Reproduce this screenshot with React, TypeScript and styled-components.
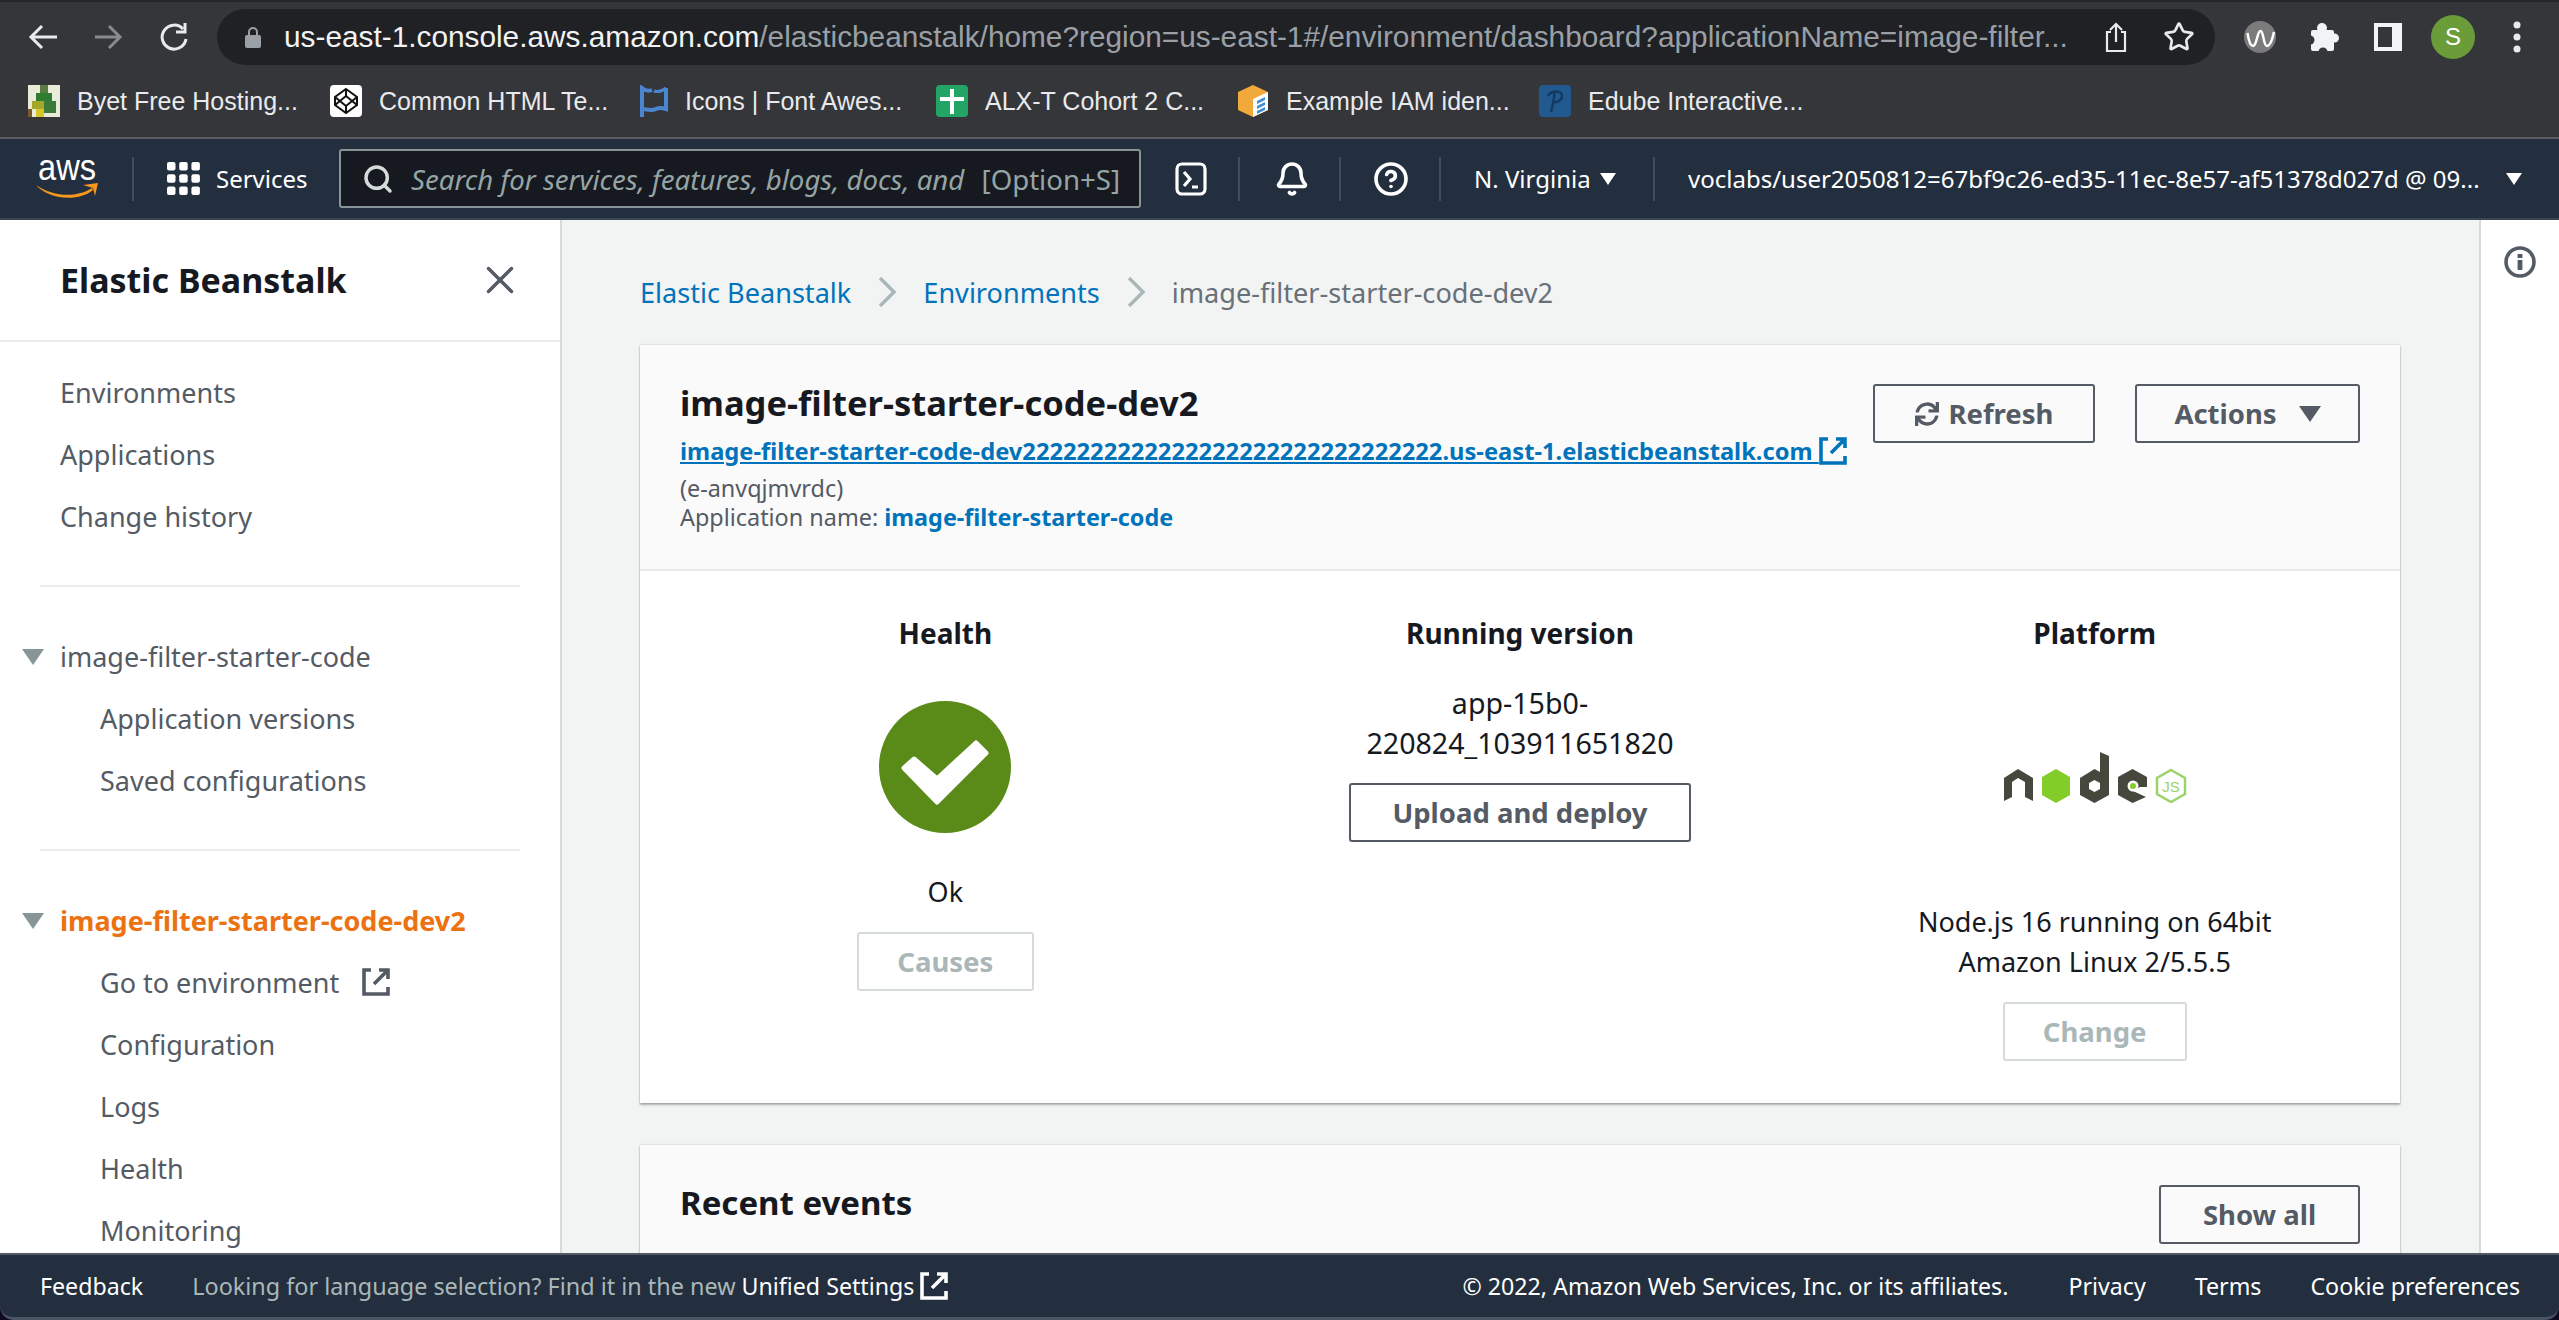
import React from "react";
import styled, { createGlobalStyle } from "styled-components";
import { Bell, CircleHelp, Star, X, Search as SearchGlyph } from "lucide-react";
import { FaSync } from "react-icons/fa";

const Global = createGlobalStyle`
  html, body { margin: 0; padding: 0; background: #120a24; overflow: hidden; }
  * { box-sizing: border-box; }
  body { font-family: "Noto Sans", "Open Sans", sans-serif; }
`;

const Page = styled.div`
  width: 2559px; height: 1320px; display: flex; flex-direction: column; overflow: hidden;
`;

/* Browser chrome */
const BrowserTop = styled.header`
  height: 139px; flex: none; background: #35363a; border-top: 2px solid #26272a;
  border-bottom: 2px solid #5c5d60; display: flex; flex-direction: column;
`;
const Toolbar = styled.div`
  height: 56px; margin-top: 7px; flex: none; display: flex; align-items: center; padding-left: 28px;
`;
const NavBtn = styled.span<{ $w?: number }>`
  width: ${p => p.$w ?? 65}px; flex: none; display: flex; align-items: center;
`;
const Omnibox = styled.div`
  width: 1998px; height: 56px; flex: none; background: #202124; border-radius: 28px;
  display: flex; align-items: center; padding-left: 28px;
`;
const UrlHost = styled.span`
  font-family: "Liberation Sans", sans-serif; font-size: 29.8px; color: #f1f3f4; white-space: nowrap; margin-left: 23px;
`;
const UrlPath = styled.span`
  font-family: "Liberation Sans", sans-serif; font-size: 29.8px; color: #9aa0a6; white-space: nowrap; flex: none; width: 1326px;
`;
const OmniIcons = styled.div`
  display: flex; align-items: center; gap: 36px; margin-left: 20px;
`;
const ExtIcons = styled.div`
  display: flex; align-items: center; margin-left: 29px;
`;
const Avatar = styled.span`
  width: 44px; height: 44px; border-radius: 50%; background: #6a9c3a; color: #fff; font-size: 24px;
  font-family: "Liberation Sans", sans-serif; display: flex; align-items: center; justify-content: center;
  margin: 0 38px 0 29px;
`;
const Bookmarks = styled.div`
  height: 32px; margin-top: 20px; flex: none; display: flex; align-items: center; padding-left: 28px;
`;
const Bookmark = styled.div<{ $w: number }>`
  width: ${p => p.$w}px; flex: none; display: flex; align-items: center; gap: 17px;
  font-family: "Liberation Sans", sans-serif; font-size: 25px; color: #e8eaed; white-space: nowrap;
`;

/* AWS nav */
const AwsNav = styled.nav`
  height: 81px; flex: none; background: #232f3e; border-bottom: 2px solid #3b4654; display: flex; align-items: center;
  color: #fff; padding-left: 37px; font-size: 24px;
`;
const LogoBox = styled.span`
  width: 61px; height: 42px; flex: none; display: block;
`;
const NavDivider = styled.span<{ $l: number; $r: number }>`
  width: 2px; height: 44px; flex: none; background: #414d5c; margin: 0 ${p => p.$r}px 0 ${p => p.$l}px;
`;
const Services = styled.span`
  margin: 0 34px 0 16px; flex: none; width: 89px; white-space: nowrap;
`;
const SearchBox = styled.div`
  width: 802px; height: 59px; flex: none; background: #16191f; border: 2px solid #879596; border-radius: 3px;
  display: flex; align-items: center; padding: 0 19px 0 21px; color: #95a5a6; font-size: 27.6px; white-space: nowrap;
`;
const SearchHint = styled.span`
  font-style: italic; margin-left: 17px; flex: 1; overflow: hidden;
`;
const NavText = styled.span<{ $w: number }>`
  width: ${p => p.$w}px; flex: none; white-space: nowrap;
`;
const Caret = styled.span<{ $s?: number; $c?: string }>`
  display: block; width: 0; height: 0; flex: none;
  border-left: ${p => p.$s ?? 9}px solid transparent; border-right: ${p => p.$s ?? 9}px solid transparent;
  border-top: ${p => Math.round((p.$s ?? 9) * 1.45)}px solid ${p => p.$c ?? "#fff"};
`;

/* Body */
const Body = styled.div`
  flex: 1; min-height: 0; display: flex; background: #f2f3f3; overflow: hidden;
`;
const Side = styled.aside`
  width: 562px; flex: none; background: #fff; border-right: 2px solid #d5dbdb; overflow: hidden;
`;
const SideHead = styled.div`
  height: 122px; border-bottom: 2px solid #eaeded; display: flex; align-items: center; justify-content: space-between;
  padding: 0 37px 0 60px; color: #16191f; font-weight: 700; font-size: 34px;
`;
const SideList = styled.ul`
  list-style: none; margin: 0; padding: 19px 0 0;
`;
const SideItem = styled.li<{ $sub?: boolean; $active?: boolean }>`
  height: 62px; display: flex; align-items: center; position: relative;
  padding-left: ${p => (p.$sub ? 100 : 60)}px;
  font-size: 27px; color: ${p => (p.$active ? "#ec7211" : "#545b64")}; font-weight: ${p => (p.$active ? 700 : 400)};
`;
const Twist = styled.span`
  position: absolute; left: 22px; top: 24px; display: block;
`;
const SideRule = styled.hr`
  border: 0; height: 2px; background: #eaeded; margin: 38px 40px;
`;
const Main = styled.main`
  flex: 1; padding: 0 79px 0 78px; min-width: 0;
`;
const Crumbs = styled.div`
  height: 125px; display: flex; align-items: center; font-size: 27.1px; gap: 27px; padding-top: 19px;
`;
const CrumbLink = styled.a`
  color: #0073bb;
`;
const CrumbNow = styled.span`
  color: #687078;
`;
const Card = styled.section`
  background: #fff; box-shadow: 0 2px 2px rgba(0,28,36,.3), 0 0 2px rgba(0,28,36,.2); margin-bottom: 42px;
`;
const CardHead = styled.div`
  height: 226px; background: #fafafa; border-bottom: 2px solid #eaeded; padding: 35px 40px 0; display: flex; justify-content: space-between;
`;
const CardTitle = styled.h1`
  margin: 0; font-size: 34.5px; line-height: 46px; color: #16191f; font-weight: 700; white-space: nowrap;
`;
const EnvLink = styled.a`
  display: flex; align-items: center; margin-top: 7px; height: 36px; font-size: 23.7px; font-weight: 700; color: #0073bb; white-space: pre;
`;
const Under = styled.span` text-decoration: underline; `;
const Meta = styled.div`
  font-size: 23.4px; line-height: 29px; color: #545b64; margin-top: 5px;
`;
const MetaLink = styled.a`
  color: #0073bb; font-weight: 700;
`;
const HeadActions = styled.div`
  display: flex; gap: 40px; align-items: flex-start; margin-top: 4px;
`;
const Btn = styled.button<{ $w: number; $disabled?: boolean }>`
  width: ${p => p.$w}px; height: 59px; flex: none; background: ${p => (p.$disabled ? "#fff" : "transparent")};
  border: 2px solid ${p => (p.$disabled ? "#d5dbdb" : "#545b64")}; border-radius: 3px;
  font: 700 27.5px "Noto Sans", sans-serif; color: ${p => (p.$disabled ? "#aab7b8" : "#545b64")};
  display: flex; align-items: center; justify-content: center; gap: 10px; padding: 0;
`;
const Columns = styled.div`
  display: grid; grid-template-columns: repeat(3, 1fr); height: 532px; padding: 0 18px;
`;
const Col = styled.div`
  display: flex; flex-direction: column; align-items: center; color: #16191f; font-size: 27px; text-align: center; padding-top: 43px;
`;
const ColTitle = styled.h3`
  margin: 0; font-size: 28px; line-height: 38px; font-weight: 700;
`;
const Lines = styled.div<{ $mt: number; $size?: number }>`
  line-height: 40px; margin-top: ${p => p.$mt}px; margin-bottom: 20px; font-size: ${p => p.$size ?? 27}px;
`;
const Mark = styled.span<{ $mt: number; $mb: number }>`
  display: block; margin-top: ${p => p.$mt}px; margin-bottom: ${p => p.$mb}px; line-height: 0;
`;
const OkLine = styled.span`
  line-height: 38px; margin-bottom: 21px;
`;
const EventsHead = styled.div`
  height: 130px; background: #fafafa; display: flex; justify-content: space-between; padding: 40px 40px 0;
`;
const EventsTitle = styled.h2`
  margin: 0; font-size: 33px; line-height: 36px; color: #16191f; font-weight: 700;
`;
const Rail = styled.aside`
  width: 80px; flex: none; background: #fff; border-left: 2px solid #d5dbdb; display: flex; justify-content: center; padding-top: 26px;
`;

/* Footer */
const Foot = styled.footer`
  height: 67px; flex: none; background: #232f3e; border-top: 2px solid #545b64; border-bottom: 3px solid #4a5564;
  border-radius: 0 0 14px 14px; color: #fff; font-size: 23.2px; display: flex; align-items: center; padding: 0 39px 0 40px; white-space: nowrap;
`;
const FootMuted = styled.span`
  color: #aab7b8; font-size: 23.4px; margin-left: 49px; margin-right: 6px;
`;
const FootRight = styled.div`
  margin-left: auto; display: flex; gap: 49px; align-items: center;
`;
const FootCopy = styled.span`
  margin-right: 11px;
`;
const Spacer = styled.span<{ $w: number }>`
  width: ${p => p.$w}px; flex: none;
`;

const Ext = ({ c, s }: { c: string; s: number }) => (
  <svg width={s} height={s} viewBox="0 0 28 28" fill="none" stroke={c} strokeWidth="3.6" style={{ flex: "none" }}>
    <path d="M9 2H2v24h24v-7" />
    <path d="M17 2h9v9M26 2 12 16" />
  </svg>
);

const AwsLogo = () => (
  <LogoBox>
    <svg width="61" height="42" viewBox="0 0 61 42" style={{ overflow: "visible" }}>
      <text x="1" y="22" fontFamily="Liberation Sans, sans-serif" fontSize="36" fill="#fff" textLength="58" lengthAdjust="spacingAndGlyphs">aws</text>
      <path d="M-1 27C16 39 40 40 55 30l1 2C42 44 12 42-1 27Z" fill="#f7981d" />
      <path d="M46 27l15-2-3 13-2-8z" fill="#f7981d" />
    </svg>
  </LogoBox>
);

const GridIcon = () => (
  <svg width="33" height="33" viewBox="0 0 33 33" fill="#fff" style={{ flex: "none" }}>
    {[0, 12.2, 24.4].flatMap(y => [0, 12.2, 24.4].map(x => <rect key={`${x}-${y}`} x={x} y={y} width="8.5" height="8.5" rx="2" />))}
  </svg>
);

const NodeLogo = () => (
  <svg width="184" height="52" viewBox="0 0 184 52" style={{ display: "block" }}>
    <path d="M1 50V27l14-9 15 9v23l-8-4V31l-7-4-6 4v15z" fill="#46483e" />
    <path d="M53 18l14 8v18l-14 8-14-8V26z" fill="#83cd29" />
    <path fillRule="evenodd" d="M97 1l9 4v39l-14.500 8L77 44V27l14.500-9 5.500 3zM91.500 29 86 32v6l5.500 3 5.500-3v-6z" fill="#46483e" />
    <path d="M129.500 18 144 26v10h-7l-7 4 13 6-13.500 6L115 44V26z" fill="#46483e" />
    <circle cx="130" cy="35" r="5.500" fill="#fff" />
    <circle cx="130" cy="35" r="3" fill="#83cd29" />
    <path d="M168 19l14 8v16l-14 8-14-8V27z" fill="none" stroke="#9ad36a" strokeWidth="2.500" />
    <text x="168" y="41" textAnchor="middle" fontFamily="Liberation Sans, sans-serif" fontSize="15" fill="#9ad36a">JS</text>
  </svg>
);

const Favicons = {
  byet: (
    <svg width="32" height="32" viewBox="0 0 8 8" shapeRendering="crispEdges" style={{ flex: "none" }}>
      <rect width="8" height="8" fill="#e9ecd8" />
      <rect x="3" y="0" width="2" height="2" fill="#587c41" /><rect x="2" y="2" width="4" height="2" fill="#2e7d32" />
      <rect x="1" y="4" width="3" height="2" fill="#a3a829" /><rect x="4" y="4" width="3" height="3" fill="#3c7a3a" />
      <rect x="2" y="6" width="2" height="2" fill="#d7c529" /><rect x="0" y="6" width="1" height="2" fill="#7a5a2a" />
    </svg>
  ),
  codepen: (
    <svg width="32" height="32" viewBox="0 0 32 32" style={{ flex: "none" }}>
      <rect width="32" height="32" rx="4" fill="#fff" />
      <path d="M16 4 27 12v8L16 28 5 20v-8zM16 4v7M16 21v7M5 12l11 9 11-9M5 20l11-9 11 9" fill="none" stroke="#111" strokeWidth="2" />
    </svg>
  ),
  flag: (
    <svg width="28" height="32" viewBox="0 0 28 32" fill="none" style={{ flex: "none" }}>
      <path d="M2 32V3q5 4 10 2" stroke="#4a86cf" strokeWidth="4" />
      <path d="M26 3v21q-6-2-10 0t-12 0" stroke="#4a86cf" strokeWidth="4" />
      <path d="M14 6q6 2 12-3" stroke="#4a86cf" strokeWidth="3" />
    </svg>
  ),
  sheet: (
    <svg width="32" height="32" viewBox="0 0 32 32" style={{ flex: "none" }}>
      <rect width="32" height="32" rx="4" fill="#23a566" />
      <path d="M14 4h4v8h10v4H18v13h-4V16H4v-4h10z" fill="#fff" />
    </svg>
  ),
  box: (
    <svg width="32" height="32" viewBox="0 0 32 32" style={{ flex: "none" }}>
      <path d="M16 0 31 7v18l-15 7L1 25V7z" fill="#f2a93b" />
      <path d="M16 14 31 7v18l-15 7z" fill="#ffffff" />
      <path d="M20 16l8-4v3l-8 4zM20 21l8-4v3l-8 4zM20 26l8-4v3l-8 4z" fill="#3f8fd2" />
    </svg>
  ),
  edube: (
    <svg width="32" height="32" viewBox="0 0 32 32" style={{ flex: "none" }}>
      <rect width="32" height="32" rx="4" fill="#22598f" />
      <path d="M12 27c2-7 3-14 4-21M9 11c2-5 14-7 14 0 0 5-6 7-9 6" fill="none" stroke="#123a63" strokeWidth="2.4" />
    </svg>
  ),
};

export default function App() {
  return (
    <Page>
      <Global />
      <BrowserTop>
        <Toolbar>
          <NavBtn>
            <svg width="30" height="32" viewBox="0 0 30 32" fill="none" stroke="#e8eaed" strokeWidth="3"><path d="M29 16H3M14 5 3 16l11 11" /></svg>
          </NavBtn>
          <NavBtn>
            <svg width="30" height="32" viewBox="0 0 30 32" fill="none" stroke="#8a8b8e" strokeWidth="3"><path d="M2 16h25M16 5l11 11-11 11" /></svg>
          </NavBtn>
          <NavBtn $w={59}>
            <svg width="30" height="32" viewBox="0 0 30 32" fill="none" stroke="#e8eaed" strokeWidth="3"><path d="M25 8a12 12 0 1 0 3 10" /><path d="M27 2v9h-9" /></svg>
          </NavBtn>
          <Omnibox>
            <svg width="16" height="22" viewBox="0 0 16 22" style={{ flex: "none" }}>
              <path d="M4 9V6a4 4 0 0 1 8 0v3" fill="none" stroke="#9aa0a6" strokeWidth="2" />
              <rect y="9" width="16" height="13" rx="2" fill="#9aa0a6" />
            </svg>
            <UrlHost>us-east-1.console.aws.amazon.com</UrlHost>
            <UrlPath>/elasticbeanstalk/home?region=us-east-1#/environment/dashboard?applicationName=image-filter...</UrlPath>
            <OmniIcons>
              <svg width="22" height="30" viewBox="0 0 22 30" fill="none" stroke="#e8eaed" strokeWidth="2.2" style={{ flex: "none" }}>
                <path d="M6 10H2v19h18V10h-4M11 20V2M5 8l6-6 6 6" />
              </svg>
              <Star size={32} color="#e8eaed" strokeWidth={2} />
            </OmniIcons>
          </Omnibox>
          <ExtIcons>
            <svg width="32" height="32" viewBox="0 0 32 32" style={{ flex: "none" }}>
              <circle cx="16" cy="16" r="16" fill="#7b7b7b" />
              <path d="M3.500 12C5 22 7 25 9 25c4 0 4-15 7.500-15S19 25 23 25c3 0 5-5 7-14" fill="none" stroke="#fff" strokeWidth="2.500" />
            </svg>
            <Spacer $w={34} />
            <svg width="29" height="28" viewBox="0 0 29 28" style={{ flex: "none" }}>
              <g fill="#f1f3f4">
                <rect x="1" y="7" width="23" height="21" rx="2" />
                <circle cx="12" cy="5" r="5" />
                <circle cx="24.500" cy="15" r="4.500" />
              </g>
              <circle cx="0" cy="17" r="4.500" fill="#35363a" />
              <circle cx="13" cy="29" r="4.500" fill="#35363a" />
            </svg>
            <Spacer $w={35} />
            <svg width="28" height="28" viewBox="0 0 28 28" style={{ flex: "none" }}>
              <path fillRule="evenodd" d="M0 0h28v28H0zM4 4v20h14V4z" fill="#f1f3f4" />
            </svg>
            <Avatar>S</Avatar>
            <svg width="8" height="32" viewBox="0 0 8 32" fill="#e8eaed" style={{ flex: "none" }}>
              <circle cx="4" cy="4" r="3.500" /><circle cx="4" cy="16" r="3.500" /><circle cx="4" cy="28" r="3.500" />
            </svg>
          </ExtIcons>
        </Toolbar>
        <Bookmarks>
          <Bookmark $w={302}>{Favicons.byet}Byet Free Hosting...</Bookmark>
          <Bookmark $w={310}>{Favicons.codepen}Common HTML Te...</Bookmark>
          <Bookmark $w={296}>{Favicons.flag}Icons | Font Awes...</Bookmark>
          <Bookmark $w={301}>{Favicons.sheet}ALX-T Cohort 2 C...</Bookmark>
          <Bookmark $w={302}>{Favicons.box}Example IAM iden...</Bookmark>
          <Bookmark $w={300}>{Favicons.edube}Edube Interactive...</Bookmark>
        </Bookmarks>
      </BrowserTop>
      <AwsNav>
        <AwsLogo />
        <NavDivider $l={34} $r={33} />
        <GridIcon />
        <Services>Services</Services>
        <SearchBox>
          <SearchGlyph size={32} color="#d5dbdb" strokeWidth={2.6} style={{ flex: "none" }} />
          <SearchHint>Search for services, features, blogs, docs, and</SearchHint>
          <span>[Option+S]</span>
        </SearchBox>
        <Spacer $w={34} />
        <svg width="32" height="34" viewBox="0 0 32 34" fill="none" stroke="#fff" strokeWidth="3.200" style={{ flex: "none" }}>
          <rect x="2" y="2" width="28" height="30" rx="5" /><path d="m9 10 6 7-6 7M17 25h6" />
        </svg>
        <NavDivider $l={31} $r={34} />
        <Bell size={36} color="#fff" strokeWidth={2.400} style={{ flex: "none" }} />
        <NavDivider $l={29} $r={32} />
        <CircleHelp size={36} color="#fff" strokeWidth={2.400} style={{ flex: "none" }} />
        <NavDivider $l={30} $r={33} />
        <NavText $w={126}>N. Virginia</NavText>
        <Caret $s={8} />
        <NavDivider $l={37} $r={33} />
        <NavText $w={818}>voclabs/user2050812=67bf9c26-ed35-11ec-8e57-af51378d027d @ 09...</NavText>
        <Caret $s={8} />
      </AwsNav>
      <Body>
        <Side>
          <SideHead>
            Elastic Beanstalk
            <X size={46} color="#545b64" strokeWidth={1.800} />
          </SideHead>
          <SideList>
            <SideItem>Environments</SideItem>
            <SideItem>Applications</SideItem>
            <SideItem>Change history</SideItem>
            <SideRule />
            <SideItem><Twist><Caret $s={11} $c="#879596" /></Twist>image-filter-starter-code</SideItem>
            <SideItem $sub>Application versions</SideItem>
            <SideItem $sub>Saved configurations</SideItem>
            <SideRule />
            <SideItem $active><Twist><Caret $s={11} $c="#879596" /></Twist>image-filter-starter-code-dev2</SideItem>
            <SideItem $sub>Go to environment<Spacer $w={23} /><Ext c="#545b64" s={28} /></SideItem>
            <SideItem $sub>Configuration</SideItem>
            <SideItem $sub>Logs</SideItem>
            <SideItem $sub>Health</SideItem>
            <SideItem $sub>Monitoring</SideItem>
          </SideList>
        </Side>
        <Main>
          <Crumbs>
            <CrumbLink>Elastic Beanstalk</CrumbLink>
            <svg width="18" height="30" viewBox="0 0 18 30" fill="none" stroke="#aab7b8" strokeWidth="3.400"><path d="m2 1 14 14L2 29" /></svg>
            <CrumbLink>Environments</CrumbLink>
            <svg width="18" height="30" viewBox="0 0 18 30" fill="none" stroke="#aab7b8" strokeWidth="3.400"><path d="m2 1 14 14L2 29" /></svg>
            <CrumbNow>image-filter-starter-code-dev2</CrumbNow>
          </Crumbs>
          <Card>
            <CardHead>
              <div>
                <CardTitle>image-filter-starter-code-dev2</CardTitle>
                <EnvLink>
                  <Under>image-filter-starter-code-dev2222222222222222222222222222222.us-east-1.elasticbeanstalk.com </Under>
                  <Ext c="#0073bb" s={28} />
                </EnvLink>
                <Meta>
                  (e-anvqjmvrdc)<br />
                  Application name: <MetaLink>image-filter-starter-code</MetaLink>
                </Meta>
              </div>
              <HeadActions>
                <Btn $w={222}><FaSync size={24} />Refresh</Btn>
                <Btn $w={225}>Actions<Spacer $w={2} /><Caret $s={11} $c="#545b64" /></Btn>
              </HeadActions>
            </CardHead>
            <Columns>
              <Col>
                <ColTitle>Health</ColTitle>
                <Mark $mt={49} $mb={40}>
                  <svg width="132" height="132" viewBox="0 0 132 132">
                    <circle cx="66" cy="66" r="66" fill="#5a8a18" />
                    <path d="M25 67l10-9 23 20 39-36 10 10-49 49z" fill="#fff" stroke="#fff" strokeWidth="5" strokeLinejoin="round" />
                  </svg>
                </Mark>
                <OkLine>Ok</OkLine>
                <Btn $w={177} $disabled>Causes</Btn>
              </Col>
              <Col>
                <ColTitle>Running version</ColTitle>
                <Lines $mt={31} $size={28.6}>app-15b0-<br />220824_103911651820</Lines>
                <Btn $w={342} style={{ background: "#fff" }}>Upload and deploy</Btn>
              </Col>
              <Col>
                <ColTitle>Platform</ColTitle>
                <Mark $mt={99} $mb={99}><NodeLogo /></Mark>
                <Lines $mt={0}>Node.js 16 running on 64bit<br />Amazon Linux 2/5.5.5</Lines>
                <Btn $w={184} $disabled>Change</Btn>
              </Col>
            </Columns>
          </Card>
          <Card>
            <EventsHead>
              <EventsTitle>Recent events</EventsTitle>
              <Btn $w={201}>Show all</Btn>
            </EventsHead>
          </Card>
        </Main>
        <Rail>
          <svg width="32" height="32" viewBox="0 0 32 32" fill="none">
            <circle cx="16" cy="16" r="14" stroke="#545b64" strokeWidth="3.600" />
            <rect x="13.600" y="14" width="4.800" height="10" fill="#545b64" /><rect x="13.600" y="8" width="4.800" height="4" fill="#545b64" />
          </svg>
        </Rail>
      </Body>
      <Foot>
        <span>Feedback</span>
        <FootMuted>Looking for language selection? Find it in the new</FootMuted>
        <span>Unified Settings</span>
        <Spacer $w={6} />
        <Ext c="#fff" s={28} />
        <FootRight>
          <FootCopy>© 2022, Amazon Web Services, Inc. or its affiliates.</FootCopy>
          <span>Privacy</span>
          <span>Terms</span>
          <span>Cookie preferences</span>
        </FootRight>
      </Foot>
    </Page>
  );
}
